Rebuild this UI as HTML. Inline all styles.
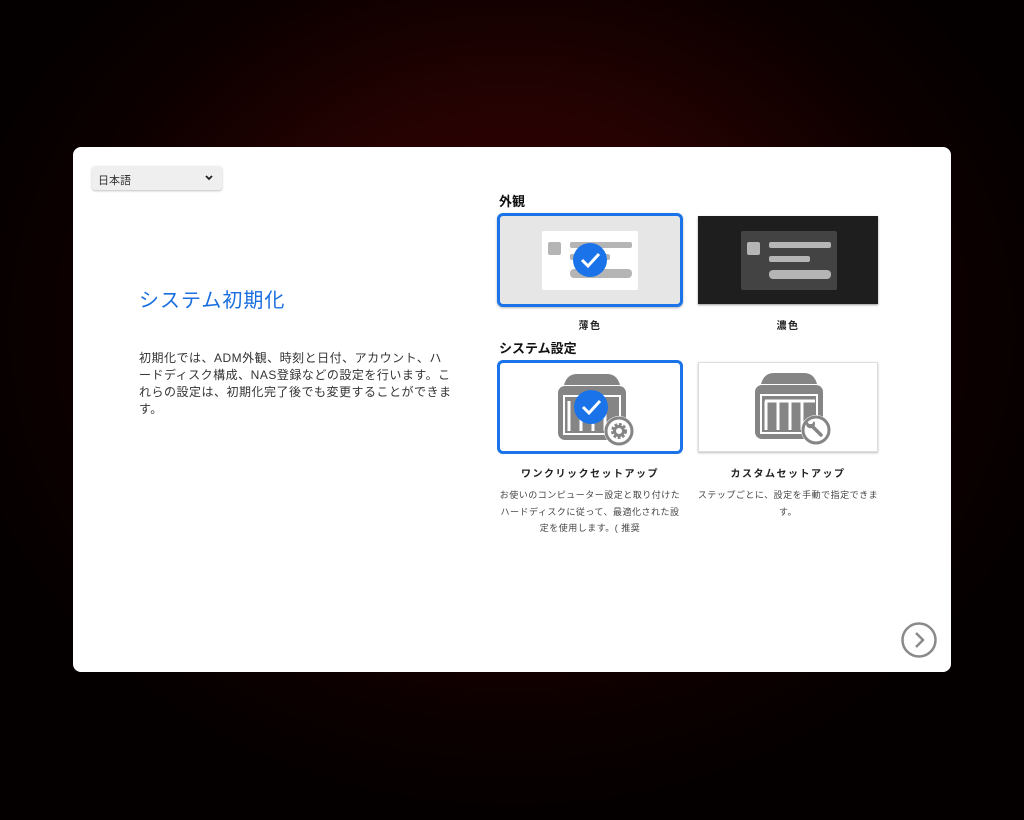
<!DOCTYPE html>
<html><head><meta charset="utf-8"><style>
*{margin:0;padding:0;box-sizing:border-box}
body{width:1024px;height:820px;overflow:hidden;font-family:"Liberation Sans","Noto Sans CJK JP",sans-serif;background:radial-gradient(ellipse 560px 480px at 512px 330px,#3a0303 0%,#260202 45%,#0c0000 80%,#050000 100%);position:relative}
.card{position:absolute;left:73px;top:147px;width:878px;height:525px;background:#fff;border-radius:8px}
.abs{position:absolute}
.sel{left:19px;top:19px;width:130px;height:24px;background:#efefef;border-radius:3px;box-shadow:0 1px 2px rgba(0,0,0,.25);font-size:11px;color:#333;padding:6px 0 0 6px}
.title{left:66px;top:137px;font-size:20px;color:#1a6fe0;letter-spacing:1px}
.desc{left:66px;top:203px;font-size:12px;line-height:17px;color:#333;letter-spacing:.5px;white-space:nowrap}
.h{font-size:13px;font-weight:bold;color:#111}
.opt{border-radius:6px}
.lab{font-size:10px;font-weight:bold;color:#222;text-align:center;letter-spacing:1.5px}
.sm{font-size:9px;color:#444;text-align:center;line-height:16.5px;letter-spacing:.5px;white-space:nowrap}
.bar{position:absolute;background:#b5b5b5;border-radius:2px}
</style></head><body>
<div class="card">
<div class="abs sel">日本語<svg class="abs" style="left:112px;top:8px" width="10" height="8" viewBox="0 0 10 8"><path d="M2 2l3 3 3-3" stroke="#222" stroke-width="1.8" fill="none"/></svg></div>
<div class="abs title">システム初期化</div>
<div class="abs desc">初期化では、ADM外観、時刻と日付、アカウント、ハ<br>ードディスク構成、NAS登録などの設定を行います。こ<br>れらの設定は、初期化完了後でも変更することができま<br>す。</div>

<div class="abs h" style="left:426px;top:44px">外観</div>
<div class="abs opt" style="left:424px;top:66px;width:186px;height:94px;background:#e6e6e6;border:3px solid #1a73e8;box-shadow:0 1px 2px rgba(0,0,0,.3)">
 <div class="abs" style="left:42px;top:15px;width:96px;height:59px;background:#fff;border-radius:2px">
  <div class="bar" style="left:6px;top:11px;width:13px;height:13px"></div>
  <div class="bar" style="left:28px;top:11px;width:62px;height:6px"></div>
  <div class="bar" style="left:28px;top:23px;width:40px;height:6px"></div>
  <div class="bar" style="left:28px;top:38px;width:62px;height:9px;border-radius:4px"></div>
  <svg class="abs" style="left:31px;top:12px" width="34" height="34" viewBox="0 0 34 34"><circle cx="17" cy="17" r="17" fill="#1a73e8"/><path d="M9 17l6 6 11-12" stroke="#fff" stroke-width="3" fill="none"/></svg>
 </div>
</div>
<div class="abs" style="left:625px;top:69px;width:180px;height:88px;background:#1e1e1e;box-shadow:0 1px 2px rgba(0,0,0,.4)">
 <div class="abs" style="left:43px;top:15px;width:96px;height:59px;background:#434343;border-radius:2px">
  <div class="bar" style="left:6px;top:11px;width:13px;height:13px"></div>
  <div class="bar" style="left:28px;top:11px;width:62px;height:6px"></div>
  <div class="bar" style="left:28px;top:25px;width:41px;height:6px"></div>
  <div class="bar" style="left:28px;top:39px;width:62px;height:9px;border-radius:4px"></div>
 </div>
</div>
<div class="abs lab" style="left:424px;top:170px;width:186px">薄色</div>
<div class="abs lab" style="left:625px;top:170px;width:180px">濃色</div>

<div class="abs h" style="left:426px;top:191px">システム設定</div>
<div class="abs opt" style="left:424px;top:213px;width:186px;height:94px;background:#fff;border:3px solid #1a73e8">
 <svg class="abs" style="left:55px;top:8px" width="80" height="75" viewBox="0 0 80 75">
  <path d="M9 14Q12 3 22 3H52Q62 3 65 14Z" fill="#858585"/>
  <rect x="3" y="15" width="68" height="54" rx="7" fill="#858585"/>
  <rect x="9" y="25" width="56" height="38" fill="none" stroke="#fff" stroke-width="2"/>
  <path d="M14 30v30M26 30v30M38 30v30M50 30v30" stroke="#fff" stroke-width="3"/>
  <circle cx="64" cy="60" r="15" fill="#fff"/><circle cx="64" cy="60" r="13" fill="none" stroke="#858585" stroke-width="3"/>
  <circle cx="64" cy="60" r="6" fill="none" stroke="#858585" stroke-width="4" stroke-dasharray="2.5 1.5"/><circle cx="64" cy="60" r="4.5" fill="none" stroke="#858585" stroke-width="3"/>
  <circle cx="36" cy="36" r="17" fill="#1a73e8"/><path d="M28 36l6 6 11-12" stroke="#fff" stroke-width="3" fill="none"/>
 </svg>
</div>
<div class="abs" style="left:625px;top:215px;width:180px;height:90px;background:#fff;border:1px solid #ddd;box-shadow:0 1px 2px rgba(0,0,0,.25)">
 <svg class="abs" style="left:53px;top:7px" width="80" height="75" viewBox="0 0 80 75">
  <path d="M9 14Q12 3 22 3H52Q62 3 65 14Z" fill="#858585"/>
  <rect x="3" y="15" width="68" height="54" rx="7" fill="#858585"/>
  <rect x="9" y="25" width="56" height="38" fill="none" stroke="#fff" stroke-width="2"/>
  <path d="M14 31v29M26 31v29M38 31v29M50 31v29M13 31h50" stroke="#fff" stroke-width="3"/>
  <circle cx="64" cy="60" r="15" fill="#fff"/><circle cx="64" cy="60" r="13" fill="none" stroke="#858585" stroke-width="3"/>
  <path d="M60 56l9 9" stroke="#858585" stroke-width="3.5" stroke-linecap="round"/>
  <path d="M55 51a4.5 4.5 0 1 0 7 0l-2 3h-3z" fill="#858585"/>
 </svg>
</div>
<div class="abs lab" style="left:424px;top:318px;width:186px">ワンクリックセットアップ</div>
<div class="abs lab" style="left:625px;top:318px;width:180px">カスタムセットアップ</div>
<div class="abs sm" style="left:424px;top:340px;width:186px">お使いのコンピューター設定と取り付けた<br>ハードディスクに従って、最適化された設<br>定を使用します。( 推奨</div>
<div class="abs sm" style="left:622px;top:340px;width:186px">ステップごとに、設定を手動で指定できま<br>す。</div>

<svg class="abs" style="left:827px;top:474px" width="38" height="38" viewBox="0 0 38 38"><circle cx="19" cy="19" r="16.5" fill="none" stroke="#8a8a8a" stroke-width="2.5"/><path d="M16 12l7 7-7 7" stroke="#8a8a8a" stroke-width="2.5" fill="none"/></svg>
</div>
</body></html>
